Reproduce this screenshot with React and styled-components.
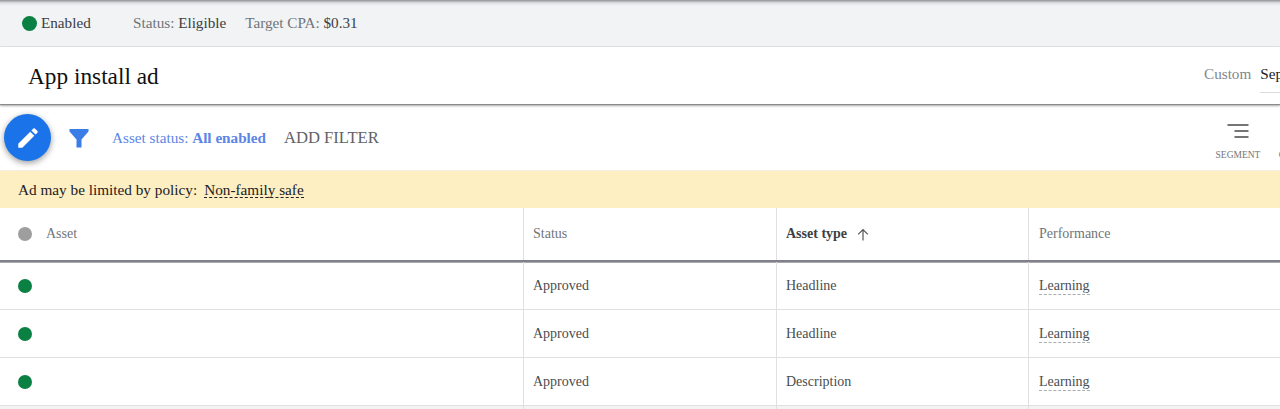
import React from "react";
import styled, { createGlobalStyle } from "styled-components";

const rows = [
  { status: "Approved", type: "Headline", performance: "Learning" },
  { status: "Approved", type: "Headline", performance: "Learning" },
  { status: "Approved", type: "Description", performance: "Learning" },
];

const App = () => {
  return (
    <Page>
      <GlobalStyle />
      <StatusBar>
        <Enabled>
          <Dot $size={15} />
          Enabled
        </Enabled>
        <StatusItem>
          Status: <strong>Eligible</strong>
        </StatusItem>
        <StatusItem>
          Target CPA: <strong>$0.31</strong>
        </StatusItem>
      </StatusBar>

      <TitleBar>
        <Title>App install ad</Title>
        <DateRange>
          <DateLabel>Custom</DateLabel>
          <DateValue>Sep 1 – 30, 2019</DateValue>
        </DateRange>
      </TitleBar>

      <Toolbar>
        <Fab aria-label="Edit">
          <svg width="26" height="26" viewBox="0 0 24 24" fill="#fff">
            <path d="M3 17.25V21h3.75L17.81 9.94l-3.75-3.75L3 17.25zM20.71 7.04a1 1 0 0 0 0-1.41l-2.34-2.34a1 1 0 0 0-1.41 0l-1.83 1.83 3.75 3.75 1.83-1.83z" />
          </svg>
        </Fab>
        <FilterIcon width="24" height="24" viewBox="0 0 24 24" fill="#3b7de6">
          <path d="M2.500 3h19v2.600L14.500 13.500V21.500H9.500V13.500L2.500 5.600z" />
        </FilterIcon>
        <FilterChip>
          Asset status: <strong>All enabled</strong>
        </FilterChip>
        <AddFilter>ADD FILTER</AddFilter>
        <ToolActions>
          <ToolAction>
            <svg width="24" height="24" viewBox="0 0 24 24" fill="#757575">
              <path d="M1.500 4h21v2h-21zM8.500 10h14v2h-14zM8.500 16h14v2h-14z" />
            </svg>
            SEGMENT
          </ToolAction>
          <ToolAction>
            <svg width="24" height="24" viewBox="0 0 24 24" />
            COLUMNS
          </ToolAction>
        </ToolActions>
      </Toolbar>

      <Banner>
        Ad may be limited by policy:
        <BannerLink>Non-family safe</BannerLink>
      </Banner>

      <HeaderRow>
        <AssetCell>
          <Dot $color="#9e9e9e" />
          <HeaderLabel $indent>Asset</HeaderLabel>
        </AssetCell>
        <Cell>
          <HeaderLabel>Status</HeaderLabel>
        </Cell>
        <Cell>
          <SortedLabel>Asset type</SortedLabel>
          <svg width="16" height="16" viewBox="0 0 16 16" fill="none" stroke="#555" strokeWidth="1.200">
            <path d="M8 14.500V3.500M3.200 8.300 8 3.500l4.800 4.800" />
          </svg>
        </Cell>
        <LastCell>
          <HeaderLabel>Performance</HeaderLabel>
        </LastCell>
      </HeaderRow>

      {rows.map((row, index) => (
        <Row key={index}>
          <AssetCell>
            <Dot />
          </AssetCell>
          <Cell>{row.status}</Cell>
          <Cell>{row.type}</Cell>
          <LastCell>
            <Dashed>{row.performance}</Dashed>
          </LastCell>
        </Row>
      ))}
      <Footer>
        <AssetCell />
        <Cell />
        <Cell />
        <LastCell />
      </Footer>
    </Page>
  );
};

const GlobalStyle = createGlobalStyle`
  html, body {
    margin: 0;
    background: #fff;
  }
  body {
    font-family: "Liberation Serif", "Times New Roman", serif;
    color: #3c4043;
  }
`;

const Page = styled.div`
  width: 1280px;
  height: 409px;
  overflow: hidden;
`;

const StatusBar = styled.div`
  display: flex;
  align-items: center;
  box-sizing: border-box;
  height: 47px;
  padding: 0 22px;
  background: #f1f3f4;
  background-image: linear-gradient(#8f9194, #dfe1e3 3px, #f1f3f4 6px);
  border-bottom: 1px solid #e3e4e6;
  font-size: 15.200px;
`;

const Enabled = styled.div`
  display: flex;
  align-items: center;
  gap: 4px;
  width: 111px;
  color: #3c4043;
`;

const Dot = styled.span`
  flex: none;
  width: ${(props) => props.$size || 14}px;
  height: ${(props) => props.$size || 14}px;
  border-radius: 50%;
  background: ${(props) => props.$color || "#0b8043"};
`;

const StatusItem = styled.div`
  margin-right: 19px;
  color: #70757a;

  strong {
    font-weight: 400;
    color: #3c4043;
  }
`;

const TitleBar = styled.div`
  display: flex;
  align-items: center;
  justify-content: space-between;
  box-sizing: border-box;
  height: 58px;
  padding-left: 28px;
  border-bottom: 1px solid #8a8a8a;
  box-shadow: 0 1px 2px rgba(0, 0, 0, 0.35);
  position: relative;
`;

const Title = styled.h1`
  margin: 1px 0 0;
  font-size: 23.300px;
  font-weight: 400;
  color: #111;
`;

const DateRange = styled.div`
  display: flex;
  align-self: flex-start;
  flex: none;
  width: 76px;
  margin-top: 18px;
  font-size: 15.200px;
  white-space: nowrap;
`;

const DateLabel = styled.span`
  margin-right: 9px;
  color: #80868b;
`;

const DateValue = styled.span`
  display: block;
  height: 27px;
  border-bottom: 1px solid #dadce0;
  color: #202124;
`;

const Toolbar = styled.div`
  display: flex;
  align-items: center;
  box-sizing: border-box;
  height: 66px;
  padding-left: 4px;
  border-bottom: 1px solid #f1ede2;
`;

const Fab = styled.button`
  display: flex;
  align-items: center;
  justify-content: center;
  flex: none;
  width: 47px;
  height: 47px;
  margin-right: 16px;
  padding: 0;
  border: none;
  border-radius: 50%;
  background: #1a73e8;
  box-shadow: 0 2px 6px rgba(0, 0, 0, 0.4);
`;

const FilterIcon = styled.svg`
  flex: none;
  margin-right: 21px;
`;

const FilterChip = styled.div`
  margin-right: 18px;
  font-size: 15.200px;
  color: #5c85e6;

  strong {
    font-weight: 700;
  }
`;

const AddFilter = styled.div`
  font-size: 16.600px;
  color: #5f6368;
`;

const ToolActions = styled.div`
  display: flex;
  gap: 18px;
  margin-left: auto;
  margin-right: -45px;
`;

const ToolAction = styled.div`
  display: flex;
  flex-direction: column;
  align-items: center;
  gap: 6px;
  width: 46px;
  margin-top: 4px;
  font-size: 9.500px;
  color: #757575;
  white-space: nowrap;
`;

const Banner = styled.div`
  display: flex;
  align-items: center;
  gap: 7px;
  box-sizing: border-box;
  height: 37px;
  padding-left: 18px;
  background: #feefc3;
  font-size: 15.250px;
  color: #202124;
`;

const BannerLink = styled.span`
  border-bottom: 1px dashed #202124;
  line-height: 15px;
`;

const Row = styled.div`
  display: grid;
  grid-template-columns: 523px 253px 252px 1fr;
  box-sizing: border-box;
  height: 48px;
  border-bottom: 1px solid #e0e0e0;
  font-size: 14px;
  color: #4a4d50;
`;

const HeaderRow = styled(Row)`
  height: 54px;
  border-bottom: 2px solid #80808a;
  box-shadow: 0 1px 0 #a9a9b0;
`;

const Footer = styled(Row)`
  height: 10px;
  background: #f1f3f4;
  border-bottom: none;
`;

const Cell = styled.div`
  display: flex;
  align-items: center;
  gap: 8px;
  box-sizing: border-box;
  padding-left: 9px;
  border-left: 1px solid #e0e0e0;
`;

const LastCell = styled(Cell)`
  padding-left: 10px;
`;

const AssetCell = styled.div`
  display: flex;
  align-items: center;
  padding-left: 18px;
`;

const HeaderLabel = styled.span`
  margin-left: ${(props) => (props.$indent ? "14px" : "0")};
  color: #70757a;
`;

const SortedLabel = styled.span`
  font-weight: 700;
  color: #3c4043;
`;

const Dashed = styled.span`
  margin-top: 1px;
  border-bottom: 1px dashed #a8adb2;
  line-height: 16px;
`;

export default App;
